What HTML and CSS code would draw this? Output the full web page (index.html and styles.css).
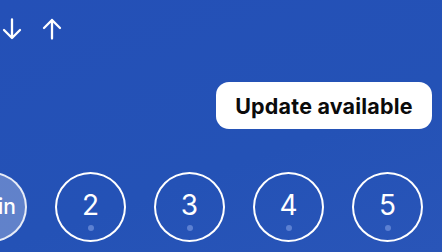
FILE: index.html
```html
<!DOCTYPE html>
<html lang="en">
<head>
    <meta charset="UTF-8">
    <meta name="viewport" content="width=device-width, initial-scale=1.0">
    <title>Tabs</title>
    <link rel="stylesheet" href="styles.css">
</head>
<body>
    <div class="toolbar">
        <button class="arrow-btn" aria-label="Move down">
            <svg width="20" height="22" viewBox="0 0 20 22"><path d="M10 1.5V20M2 12l8 8 8-8" /></svg>
        </button>
        <button class="arrow-btn" aria-label="Move up">
            <svg width="20" height="22" viewBox="0 0 20 22"><path d="M10 20.5V2M2 10l8-8 8 8" /></svg>
        </button>
    </div>
    <div class="notice-row">
        <div class="update-pill">Update available</div>
    </div>
    <div class="tab-row">
        <div class="tab active"><span class="tab-label">Main</span></div>
        <div class="tab"><span class="tab-label">2</span><span class="tab-dot"></span></div>
        <div class="tab"><span class="tab-label">3</span><span class="tab-dot"></span></div>
        <div class="tab"><span class="tab-label">4</span><span class="tab-dot"></span></div>
        <div class="tab"><span class="tab-label">5</span><span class="tab-dot"></span></div>
    </div>
</body>
</html>
```

FILE: styles.css
```css
* {
    margin: 0;
    padding: 0;
    box-sizing: border-box;
    font-family: Inter, "Noto Sans", sans-serif;
}
html, body {
    width: 442px;
    height: 252px;
    overflow: hidden;
}
body {
    background: linear-gradient(160deg, #2450b7 0%, #2452b6 60%, #2955b8 100%);
    color: white;
}
.toolbar {
    display: flex;
    gap: 20px;
    padding: 18px 0 0 2px;
    height: 82px;
}
.arrow-btn {
    background: none;
    border: none;
    width: 20px;
    height: 22px;
    display: flex;
}
.arrow-btn path {
    fill: none;
    stroke: white;
    stroke-width: 2.3;
    stroke-linecap: round;
    stroke-linejoin: round;
}
.notice-row {
    display: flex;
    justify-content: flex-end;
    padding-right: 10px;
    height: 90px;
}
.update-pill {
    background: white;
    color: #0b0b0b;
    font-weight: 700;
    font-size: 21.5px;
    height: 47px;
    width: 216px;
    border-radius: 13px;
    display: flex;
    align-items: center;
    justify-content: center;
    letter-spacing: 0.2px;
}
.tab-row {
    display: flex;
    gap: 28px;
    margin-left: -44px;
}
.tab {
    flex: none;
    width: 71px;
    height: 70px;
    border: 2px solid white;
    border-radius: 50%;
    position: relative;
    display: flex;
    align-items: center;
    justify-content: center;
}
.tab.active {
    background: rgba(255, 255, 255, 0.28);
    border-color: rgba(255, 255, 255, 0.85);
}
.tab-label {
    font-size: 28px;
    font-weight: 400;
    margin-top: -4px;
}
.tab.active .tab-label {
    font-size: 21px;
    font-weight: 500;
    margin-top: -2px;
}
.tab-dot {
    position: absolute;
    left: 50%;
    bottom: 9px;
    width: 6px;
    height: 6px;
    margin-left: -3px;
    border-radius: 50%;
    background: #5c80d2;
}
```
